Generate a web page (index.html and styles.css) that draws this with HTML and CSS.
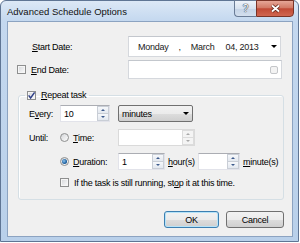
FILE: index.html
```html
<!DOCTYPE html>
<html lang="en">
<head>
    <meta charset="UTF-8">
    <title>Advanced Schedule Options</title>
    <link rel="stylesheet" href="styles.css">
</head>
<body>
    <div class="window">
        <div class="titlebar">
            <span class="title">Advanced Schedule Options</span>
            <div class="caption-buttons">
                <span class="cap-btn help">?</span>
                <span class="cap-btn close">
                    <svg width="11" height="9" viewBox="0 0 11 9">
                        <path d="M2 1.5 L9 7.5 M9 1.5 L2 7.5" stroke="#5e2418" stroke-width="3.4" fill="none"/>
                        <path d="M2 1.5 L9 7.5 M9 1.5 L2 7.5" stroke="#ffffff" stroke-width="1.8" fill="none"/>
                    </svg>
                </span>
            </div>
        </div>

        <div class="client">
            <div class="row row-start">
                <div class="lead lead-start"><u>S</u>tart Date:</div>
                <div class="datebox">
                    <span class="d-day">Monday</span>
                    <span class="d-sep">,</span>
                    <span class="d-month">March</span>
                    <span class="d-num">04, 2013</span>
                    <span class="drop-arrow"></span>
                </div>
            </div>

            <div class="row row-end">
                <div class="lead lead-end">
                    <span class="check"></span>
                    <span class="check-label"><u>E</u>nd Date:</span>
                </div>
                <div class="datebox datebox-empty">
                    <span class="mini-box"></span>
                </div>
            </div>

            <fieldset class="group">
                <legend>
                    <span class="check checked">
                        <svg width="9" height="9" viewBox="0 0 9 9"><path d="M1.6 4.4 L3.6 6.9 L7.6 1.4" stroke="#2f3f86" stroke-width="1.5" fill="none"/></svg>
                    </span>
                    <span class="check-label"><u>R</u>epeat task</span>
                </legend>
                <div class="gbody">
                    <div class="grow">
                        <span class="glabel">E<u>v</u>ery:</span>
                        <div class="textbox tb-every">
                            <span class="tb-value">10</span>
                            <span class="spinner"><span class="sp up"></span><span class="sp down"></span></span>
                        </div>
                        <div class="select">
                            <span>minutes</span>
                            <span class="drop-arrow"></span>
                        </div>
                    </div>

                    <div class="grow">
                        <span class="glabel">Until:</span>
                        <span class="radio"></span>
                        <span class="rlabel"><u>T</u>ime:</span>
                        <div class="textbox tb-time disabled">
                            <span class="tb-value"></span>
                            <span class="spinner"><span class="sp up"></span><span class="sp down"></span></span>
                        </div>
                    </div>

                    <div class="grow">
                        <span class="glabel"></span>
                        <span class="radio selected"><span class="dot"></span></span>
                        <span class="rlabel"><u>D</u>uration:</span>
                        <div class="textbox tb-hours">
                            <span class="tb-value">1</span>
                            <span class="spinner"><span class="sp up"></span><span class="sp down"></span></span>
                        </div>
                        <span class="unit unit-h"><u>h</u>our(s)</span>
                        <div class="textbox tb-mins">
                            <span class="tb-value"></span>
                            <span class="spinner"><span class="sp up"></span><span class="sp down"></span></span>
                        </div>
                        <span class="unit"><u>m</u>inute(s)</span>
                    </div>

                    <div class="grow grow-stop">
                        <span class="check"></span>
                        <span class="check-label">If the task is still running, st<u>o</u>p it at this time.</span>
                    </div>
                </div>
            </fieldset>

            <div class="buttons">
                <button class="btn default">OK</button>
                <button class="btn">Cancel</button>
            </div>
        </div>
    </div>
</body>
</html>
```

FILE: styles.css
```css
* {
    box-sizing: border-box;
}

body {
    margin: 0;
    background-color: #ffffff;
    font-family: "Liberation Sans", Arial, sans-serif;
    font-size: 9px;
    letter-spacing: -0.25px;
    color: #000000;
}

u {
    text-decoration: underline;
    text-underline-offset: 1px;
}

.window {
    width: 299px;
    height: 242px;
    border: 1px solid #5f7594;
    border-radius: 6px 6px 0 0;
    background: linear-gradient(#dce8f6, #c4d8ef 20px, #b9d0ea);
    padding: 0 5px 4px 6px;
    display: flex;
    flex-direction: column;
}

.titlebar {
    height: 20px;
    display: flex;
    align-items: flex-start;
}

.title {
    font-size: 9.5px;
    letter-spacing: 0;
    line-height: 21px;
    color: #111111;
}

.caption-buttons {
    margin-left: auto;
    margin-right: -1px;
    margin-top: -1px;
    display: flex;
}

.cap-btn {
    height: 17px;
    display: flex;
    align-items: center;
    justify-content: center;
    border: 1px solid #6a7c96;
}

.help {
    width: 22px;
    border-right: none;
    border-radius: 0 0 0 4px;
    background: linear-gradient(#eef3fa, #d7e2ef 50%, #c4d3e6 51%, #d3dfee);
    color: #ffffff;
    font-size: 10px;
    text-shadow: 0 0 1px #2d3a4e, 0 0 1px #2d3a4e, 0 0 1px #2d3a4e;
}

.close {
    width: 38px;
    border-color: #7a3326;
    border-radius: 0 0 4px 0;
    background: linear-gradient(#e6a697, #d27a66 45%, #c14a35 52%, #d06650);
}

.client {
    flex: 1;
    border: 1px solid #8ca3c1;
    background-color: #f0f0f0;
    display: flex;
    flex-direction: column;
}

.row {
    display: flex;
    align-items: center;
}

.row-start {
    margin-top: 14px;
    height: 21px;
}

.row-end {
    margin-top: 3px;
    height: 19px;
}

.lead {
    width: 120px;
    display: flex;
    align-items: center;
}

.lead-start {
    padding-left: 24px;
}

.lead-end {
    padding-left: 9px;
}

.check {
    width: 9px;
    height: 9px;
    flex-shrink: 0;
    border: 1px solid #8e8f8f;
    background: linear-gradient(135deg, #d4d6d9, #fdfdfd);
    box-shadow: inset 0 0 0 1px #f6f6f6;
    display: flex;
    align-items: center;
    justify-content: center;
}

.check svg {
    display: block;
    margin: -1px;
}

.check-label {
    margin-left: 5px;
}

.datebox {
    width: 153px;
    height: 100%;
    border: 1px solid #d5d8dd;
    border-top-color: #c3c7cd;
    background-color: #ffffff;
    display: flex;
    align-items: center;
    color: #1a1a1a;
}

.datebox-empty {
    width: 154px;
    justify-content: flex-end;
    padding-right: 3px;
}

.d-day {
    margin-left: 9px;
}

.d-sep {
    margin-left: 10px;
}

.d-month {
    margin-left: 10px;
}

.d-num {
    margin-left: 11px;
}

.drop-arrow {
    margin-left: auto;
    margin-right: 3px;
    width: 0;
    height: 0;
    border-left: 3px solid transparent;
    border-right: 3px solid transparent;
    border-top: 3px solid #000000;
}

.mini-box {
    width: 8px;
    height: 8px;
    border: 1px solid #c4c6c9;
    border-radius: 2px;
    background-color: #f3f3f3;
}

.group {
    margin: 10px 8px 0 10px;
    padding: 0;
    border: 1px solid #d5dfe5;
    border-radius: 3px;
    box-shadow: inset 1px 1px 0 #ffffff;
}

.group legend {
    margin-left: 6px;
    padding: 0 3px 0 2px;
    height: 12px;
    display: flex;
    align-items: center;
}

.gbody {
    padding: 4px 0 11px 10px;
}

.grow {
    height: 17px;
    display: flex;
    align-items: center;
    margin-bottom: 7px;
}

.grow-stop {
    height: 11px;
    margin-bottom: 0;
    padding-left: 31px;
}

.glabel {
    width: 31px;
}

.radio {
    width: 9px;
    height: 9px;
    flex-shrink: 0;
    border: 1px solid #8e8f8f;
    border-radius: 50%;
    background: linear-gradient(135deg, #d4d6d9, #fdfdfd);
    display: flex;
    align-items: center;
    justify-content: center;
}

.radio .dot {
    width: 5px;
    height: 5px;
    border-radius: 50%;
    background: radial-gradient(circle at 40% 40%, #8cc4f0, #1c5f9e 60%, #0f3b6c);
}

.rlabel {
    width: 45px;
    margin-left: 4px;
}

.textbox {
    height: 17px;
    border: 1px solid #e2e3ea;
    border-top-color: #abadb3;
    background-color: #ffffff;
    display: flex;
    align-items: stretch;
}

.tb-value {
    flex: 1;
    padding-left: 3px;
    display: flex;
    align-items: center;
}

.tb-every {
    width: 50px;
}

.tb-time {
    width: 77px;
}

.tb-time.disabled {
    border-color: #dadada;
}

.tb-hours {
    width: 47px;
}

.tb-mins {
    width: 42px;
}

.spinner {
    width: 12px;
    display: flex;
    flex-direction: column;
}

.sp {
    flex: 1;
    border: 1px solid #c9ced6;
    background: linear-gradient(#f6f8fb, #e3e8ef);
    display: flex;
    align-items: center;
    justify-content: center;
}

.sp.down {
    border-top: none;
}

.sp.up::after,
.sp.down::after {
    content: "";
    width: 0;
    height: 0;
    border-left: 2px solid transparent;
    border-right: 2px solid transparent;
}

.sp.up::after {
    border-bottom: 2px solid #3d5a8c;
}

.sp.down::after {
    border-top: 2px solid #3d5a8c;
}

.disabled .sp {
    border-color: #dcdcdc;
    background: #f4f4f4;
}

.disabled .sp.up::after {
    border-bottom-color: #a8a8a8;
}

.disabled .sp.down::after {
    border-top-color: #a8a8a8;
}

.unit {
    margin-left: 3px;
}

.unit-h {
    width: 30px;
}

.select {
    width: 75px;
    height: 17px;
    margin-left: 8px;
    padding-left: 3px;
    border: 1px solid #707070;
    border-radius: 2px;
    background: linear-gradient(#f2f2f2, #ebebeb 50%, #dddddd 51%, #cfcfcf);
    display: flex;
    align-items: center;
}

.buttons {
    margin-top: 11px;
    padding-right: 8px;
    display: flex;
    justify-content: flex-end;
    gap: 7px;
}

.btn {
    height: 17px;
    width: 58px;
    padding: 0;
    border: 1px solid #707070;
    border-radius: 3px;
    background: linear-gradient(#f2f2f2, #ebebeb 50%, #dddddd 51%, #cfcfcf);
    font-family: "Liberation Sans", Arial, sans-serif;
    font-size: 9px;
    letter-spacing: -0.25px;
    color: #000000;
}

.btn.default {
    width: 55px;
    border-color: #3c7fb1;
    box-shadow: inset 0 0 0 1px #b6e3f8;
}
```
